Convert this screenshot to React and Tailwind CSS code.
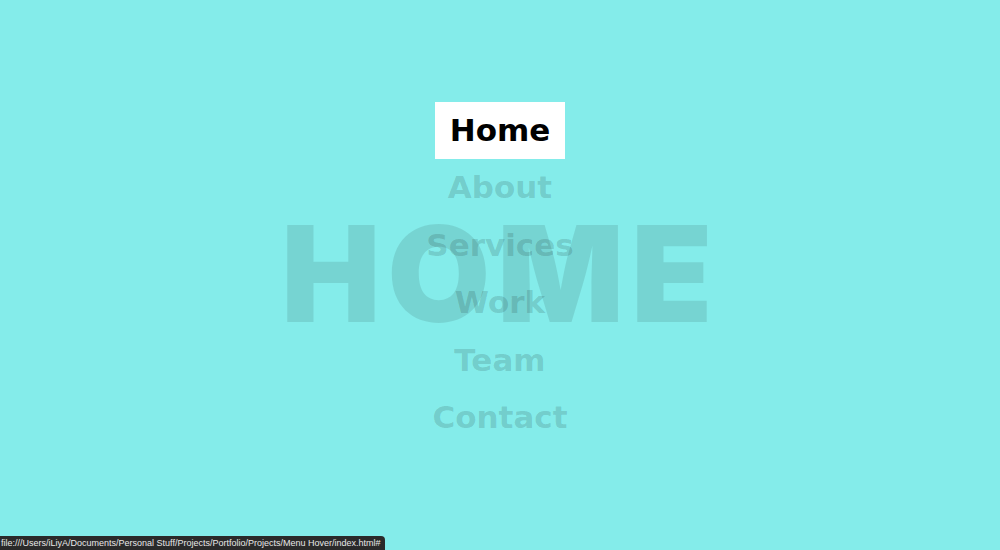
const items = ['Home', 'About', 'Services', 'Work', 'Team', 'Contact']

export default function App() {
  const active = 'Home'
  return (
    <div className="relative flex h-[550px] w-full items-center justify-center overflow-hidden bg-[#84ecea]">
      <div className="absolute inset-0 flex items-center justify-center pb-[4px]">
        <span className="select-none font-['Inter',sans-serif] text-[133px] font-black leading-none tracking-[0.05em] text-black/10">
          {active.toUpperCase()}
        </span>
      </div>

      <ul className="relative -mt-[2px] flex flex-col items-center gap-[0.5px] font-['DejaVu_Sans',sans-serif]">
        {items.map((label) => (
          <li key={label}>
            <a
              href="#"
              className={
                label === active
                  ? 'block bg-white px-[15px] py-[7px] text-[31px] font-bold leading-[43px] text-black'
                  : 'block px-[15px] py-[7px] text-[31px] font-bold leading-[43px] text-black/15'
              }
            >
              {label}
            </a>
          </li>
        ))}
      </ul>

      <div className="absolute bottom-0 left-0 rounded-tr-[4px] bg-[#2a2a2a] pl-[1px] pr-[4px] font-['Liberation_Sans',sans-serif] text-[9px] leading-[14px] text-[#e8e8e8]">
        file:///Users/iLiyA/Documents/Personal Stuff/Projects/Portfolio/Projects/Menu Hover/index.html#
      </div>
    </div>
  )
}
